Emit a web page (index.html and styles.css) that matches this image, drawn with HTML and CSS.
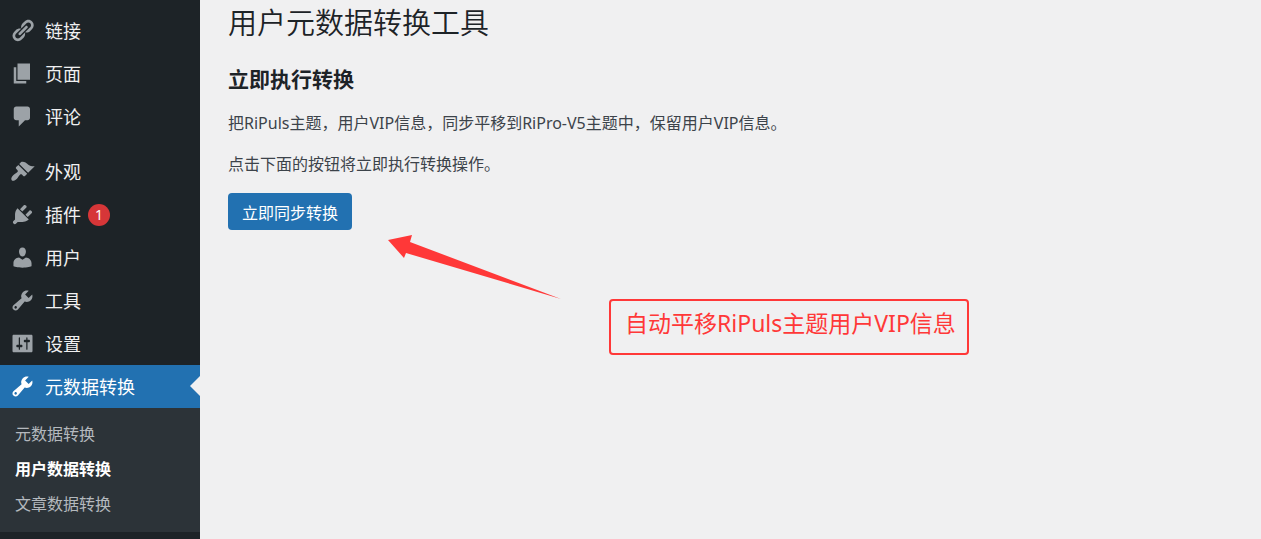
FILE: index.html
```
<!DOCTYPE html>
<html lang="zh-CN">
<head>
    <meta charset="UTF-8">
    <title>用户元数据转换工具</title>
    <link rel="stylesheet" href="styles.css">
</head>
<body>

    <nav class="sidebar">
        <ul class="menu">
            <li>
                <a href="#" class="menu-link">
                    <svg class="icon" viewBox="0 0 20 20"><path d="M17.74 2.76c1.68 1.69 1.68 4.41 0 6.1l-1.53 1.52c-1.12 1.12-2.7 1.47-4.14 1.09l2.62-2.61.76-.77.76-.76c.84-.84.84-2.2 0-3.04-.84-.85-2.2-.85-3.04 0l-.77.76-3.38 3.38c-.37-1.44-.02-3.02 1.1-4.14l1.52-1.53c1.69-1.68 4.42-1.68 6.1 0zM8.59 13.43l5.34-5.34c.42-.42.42-1.1 0-1.52-.44-.43-1.13-.39-1.53 0l-5.33 5.34c-.42.42-.42 1.1 0 1.52.44.43 1.13.39 1.52 0zm-.76 2.29l4.14-4.15c.38 1.44.03 3.02-1.09 4.14l-1.52 1.53c-1.69 1.68-4.41 1.68-6.1 0-1.68-1.68-1.68-4.42 0-6.1l1.53-1.52c1.12-1.12 2.7-1.47 4.14-1.1l-4.14 4.15c-.85.84-.85 2.2 0 3.05.84.84 2.2.84 3.04 0z"/></svg>
                    链接
                </a>
            </li>
            <li>
                <a href="#" class="menu-link">
                    <svg class="icon" viewBox="0 0 20 20"><path d="M6 15V2h10v13H6zm-1 1h8v2H3V5h2v11z"/></svg>
                    页面
                </a>
            </li>
            <li>
                <a href="#" class="menu-link">
                    <svg class="icon" viewBox="0 0 20 20"><path d="M5 2h9c1.1 0 2 .9 2 2v7c0 1.1-.9 2-2 2h-2l-5 5v-5H5c-1.1 0-2-.9-2-2V4c0-1.1.9-2 2-2z"/></svg>
                    评论
                </a>
            </li>
            <li class="group-start">
                <a href="#" class="menu-link">
                    <svg class="icon" viewBox="0 0 20 20"><path d="M14.48 11.06L7.41 3.99l1.5-1.5c.5-.56 2.3-.47 3.51.32 1.21.8 1.43 1.28 2.91 2.1 1.18.64 2.45 1.26 4.45.85zm-.71.71L6.7 4.7 4.93 6.47c-.39.39-.39 1.02 0 1.41l1.06 1.06c.39.39.39 1.03 0 1.42-.6.6-1.43 1.11-2.21 1.69-.35.26-.7.53-1.01.84C1.43 14.23.4 16.08 1.4 17.07c.99 1 2.84-.03 4.18-1.36.31-.31.58-.66.85-1.02.57-.78 1.08-1.61 1.69-2.21.39-.39 1.02-.39 1.41 0l1.06 1.06c.39.39 1.02.39 1.41 0z"/></svg>
                    外观
                </a>
            </li>
            <li>
                <a href="#" class="menu-link">
                    <svg class="icon" viewBox="0 0 20 20"><path d="M13.11 4.36L9.87 7.6 8 5.73l3.24-3.24c.35-.34 1.05-.2 1.56.32.52.51.66 1.21.31 1.55zm-8 1.77l.91-1.12 9.01 9.01-1.19.84c-.71.71-2.63 1.16-3.82 1.16H6.14L4.9 17.26c-.59.59-1.54.59-2.12 0-.59-.58-.59-1.53 0-2.12l1.24-1.24v-3.88c0-1.13.4-3.19 1.09-3.89zm7.26 3.97l3.24-3.24c.34-.35 1.04-.21 1.55.31.52.51.66 1.21.31 1.55l-3.24 3.25z"/></svg>
                    插件
                    <span class="badge">1</span>
                </a>
            </li>
            <li>
                <a href="#" class="menu-link">
                    <svg class="icon" viewBox="0 0 20 20"><path d="M10 9.25c-2.27 0-2.73-3.44-2.73-3.44C7 4.02 7.82 2 9.97 2c2.16 0 2.98 2.02 2.71 3.81 0 0-.41 3.44-2.68 3.44zm0 2.57L12.72 10c2.39 0 4.52 2.33 4.52 4.53v2.49s-3.65 1.13-7.24 1.13c-3.65 0-7.24-1.13-7.24-1.13v-2.49c0-2.25 1.94-4.48 4.47-4.48z"/></svg>
                    用户
                </a>
            </li>
            <li>
                <a href="#" class="menu-link">
                    <svg class="icon" viewBox="0 0 20 20"><path d="M16.68 9.77c-1.34 1.34-3.3 1.67-4.95.99l-5.41 6.52c-.99.99-2.59.99-3.58 0s-.99-2.59 0-3.57l6.52-5.42c-.68-1.65-.35-3.61.99-4.95 1.28-1.28 3.12-1.62 4.72-1.06l-2.89 2.89 2.82 2.82 2.86-2.87c.53 1.58.18 3.39-1.08 4.65zM3.81 16.21c.4.39 1.04.39 1.43 0 .4-.4.4-1.04 0-1.43-.39-.4-1.03-.4-1.43 0-.39.39-.39 1.03 0 1.43z"/></svg>
                    工具
                </a>
            </li>
            <li>
                <a href="#" class="menu-link">
                    <svg class="icon" viewBox="0 0 20 20"><path d="M18 16V4c0-.55-.45-1-1-1H3c-.55 0-1 .45-1 1v12c0 .55.45 1 1 1h14c.55 0 1-.45 1-1zM8 11h1c.55 0 1 .45 1 1s-.45 1-1 1H8v1.5c0 .28-.22.5-.5.5s-.5-.22-.5-.5V13H6c-.55 0-1-.45-1-1s.45-1 1-1h1V5.5c0-.28.22-.5.5-.5s.5.22.5.5V11zm5-2h-1c-.55 0-1-.45-1-1s.45-1 1-1h1V5.5c0-.28.22-.5.5-.5s.5.22.5.5V7h1c.55 0 1 .45 1 1s-.45 1-1 1h-1v5.5c0 .28-.22.5-.5.5s-.5-.22-.5-.5V9z"/></svg>
                    设置
                </a>
            </li>
            <li>
                <a href="#" class="menu-link current">
                    <svg class="icon" viewBox="0 0 20 20"><path d="M16.68 9.77c-1.34 1.34-3.3 1.67-4.95.99l-5.41 6.52c-.99.99-2.59.99-3.58 0s-.99-2.59 0-3.57l6.52-5.42c-.68-1.65-.35-3.61.99-4.95 1.28-1.28 3.12-1.62 4.72-1.06l-2.89 2.89 2.82 2.82 2.86-2.87c.53 1.58.18 3.39-1.08 4.65zM3.81 16.21c.4.39 1.04.39 1.43 0 .4-.4.4-1.04 0-1.43-.39-.4-1.03-.4-1.43 0-.39.39-.39 1.03 0 1.43z"/></svg>
                    元数据转换
                </a>
                <ul class="submenu">
                    <li><a href="#">元数据转换</a></li>
                    <li><a href="#" class="active">用户数据转换</a></li>
                    <li><a href="#">文章数据转换</a></li>
                </ul>
            </li>
        </ul>
    </nav>

    <main class="content">
        <h1>用户元数据转换工具</h1>
        <h2>立即执行转换</h2>
        <p>把RiPuls主题，用户VIP信息，同步平移到RiPro-V5主题中，保留用户VIP信息。</p>
        <p>点击下面的按钮将立即执行转换操作。</p>
        <button type="button" class="btn">立即同步转换</button>

        <!-- Note pinned over the page -->
        <svg class="arrow" viewBox="0 0 174 66"><path d="M1 6L25 1L23 8L174 65L19 19L17 24Z"/></svg>
        <div class="note">自动平移RiPuls主题用户VIP信息</div>
    </main>

</body>
</html>
```
FILE: styles.css
```
* {
    box-sizing: border-box;
}
body {
    display: flex;
    min-height: 100vh;
    margin: 0;
    background-color: #f0f0f1;
    color: #3c434a;
    font-family: "Noto Sans", "Noto Sans CJK SC", sans-serif;
    font-size: 16px;
    line-height: 24px;
}
ul {
    margin: 0;
    padding: 0;
    list-style: none;
}
a {
    text-decoration: none;
}

/* Sidebar */
.sidebar {
    flex: none;
    width: 200px;
    background-color: #1d2327;
}
.menu {
    padding-top: 9px;
}
.group-start {
    margin-top: 12px;
}
.menu-link {
    display: flex;
    align-items: center;
    gap: 10px;
    height: 43px;
    padding-left: 10px;
    color: #f0f0f1;
    font-size: 18px;
}
.icon {
    width: 25px;
    height: 25px;
    fill: #9ca2a7;
}
.badge {
    width: 22px;
    height: 22px;
    margin-left: -3px;
    border-radius: 50%;
    background-color: #d63638;
    color: #fff;
    font-size: 14px;
    line-height: 22px;
    text-align: center;
}
.current {
    position: relative;
    background-color: #2271b1;
    color: #fff;
}
.current .icon {
    fill: #fff;
}
.current::after {
    content: "";
    position: absolute;
    top: 11px;
    right: 0;
    border: 10px solid transparent;
    border-left: 0;
    border-right-color: #f0f0f1;
}
.submenu {
    padding: 9px 0 10px;
    background-color: #2c3338;
}
.submenu a {
    display: block;
    padding-left: 15px;
    color: #b4b9be;
    line-height: 35px;
}
.submenu .active {
    color: #fff;
    font-weight: 700;
}

/* Page */
.content {
    position: relative;
    flex: 1;
    padding: 4px 28px;
}
h1 {
    margin: 0 0 23px;
    color: #1d2327;
    font-size: 29px;
    font-weight: 350;
    line-height: 38px;
}
h2 {
    margin: 0 0 18px;
    color: #1d2327;
    font-size: 21px;
    line-height: 28px;
}
p {
    margin: 0 0 17px;
}
.btn {
    height: 37px;
    padding: 0 14px;
    border: none;
    border-radius: 4px;
    background-color: #2271b1;
    color: #fff;
    font-family: inherit;
    font-size: 16px;
    cursor: pointer;
}
.btn:hover {
    background-color: #135e96;
}
.arrow {
    position: absolute;
    top: 234px;
    left: 187px;
    width: 174px;
    fill: #ff3838;
}
.note {
    position: absolute;
    top: 299px;
    left: 409px;
    padding: 6px 11px 14px 14px;
    border: 2px solid #ff3838;
    border-radius: 4px;
    color: #ff3838;
    font-size: 23px;
    line-height: 32px;
    white-space: nowrap;
}
```
